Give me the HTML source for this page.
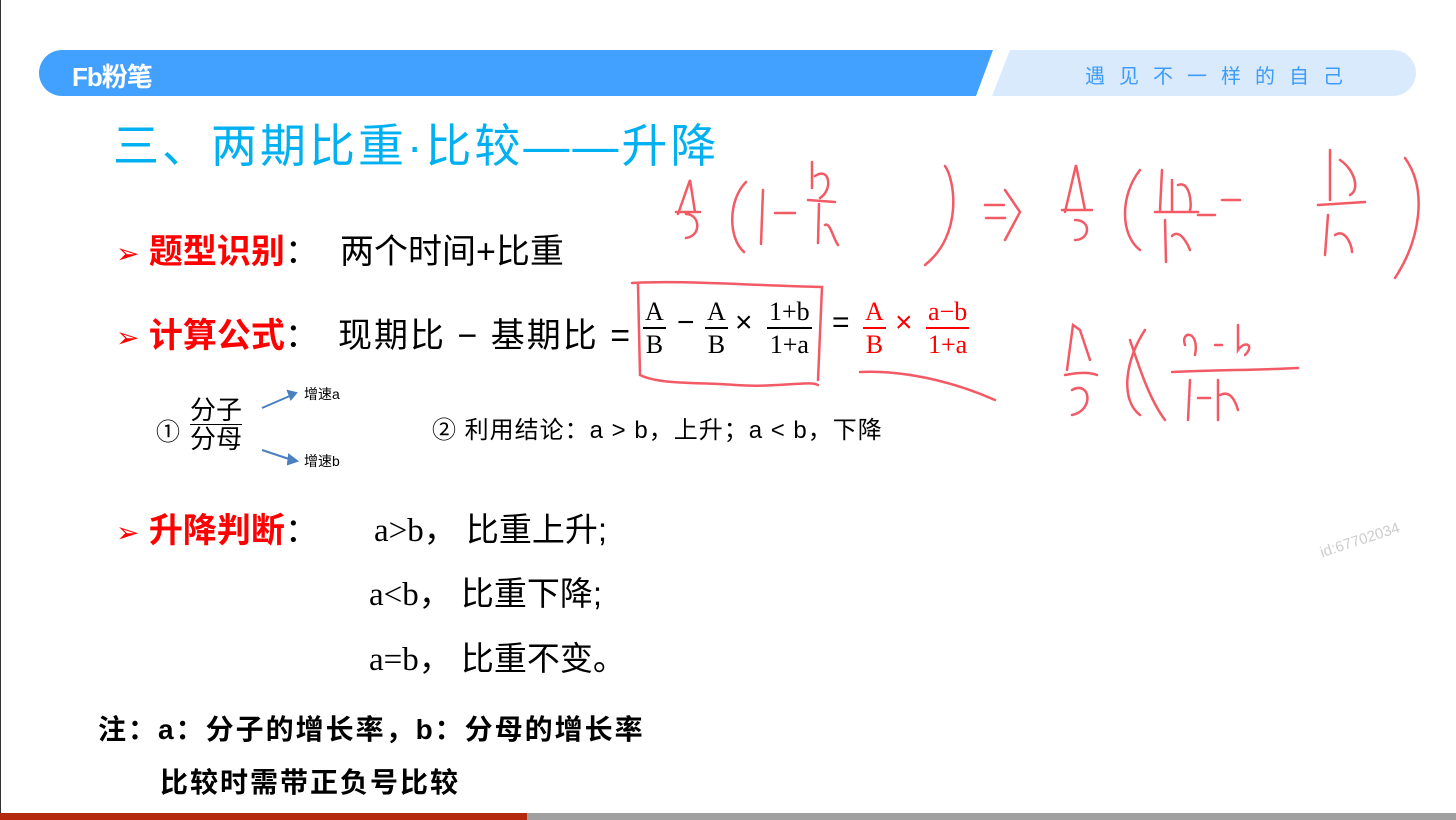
<!DOCTYPE html>
<html><head><meta charset="utf-8"><style>
body{margin:0;width:1456px;height:820px;background:#fff;position:relative;overflow:hidden;font-family:"Liberation Sans","Noto Sans CJK SC",sans-serif;}
.a{position:absolute;white-space:nowrap;}
.red{color:#f00;font-weight:bold;}
.tri{color:#f00;font-size:28px;}
.frac{position:absolute;text-align:center;font-family:"Liberation Serif","Noto Serif CJK SC",serif;font-size:26px;line-height:31px;}
.frac .n{border-bottom:2px solid #000;padding:0 2px;}
.op{position:absolute;font-size:30px;top:306px;}
</style></head><body>
<div class="a" style="left:0;top:0;width:1px;height:820px;background:#333"></div>
<svg class="a" style="left:0;top:0" width="1456" height="820">
<path d="M62 50 H993 L976 96 H62 A23 23 0 0 1 62 50Z" fill="#42a0ff"/>
<path d="M1010 50 H1393 A23 23 0 0 1 1393 96 H992Z" fill="#daeafd"/>
<rect x="0" y="813" width="527" height="7" fill="#b5290e"/>
<rect x="527" y="813" width="929" height="7" fill="#a0a0a0"/>
<g fill="none" stroke="#f25a66" stroke-width="2.5" stroke-linecap="round">
<path d="M678 214 L690 180 L695 212 M676 212 H700 M686 214 C700 214 702 236 686 238"/>
<path d="M746 182 C728 200 728 238 744 252"/>
<path d="M763 190 L761 244"/><path d="M775 213 H795"/>
<path d="M812 162 L812 188 M815 176 C830 166 833 190 820 198 M808 200 L835 202 M819 204 L818 243 M825 225 C830 222 833 238 838 245"/>
<path d="M820 166 C830 180 838 235 800 265" transform="translate(125,0)"/>
<path d="M985 205 H1004 M986 218 H1005 M1005 190 L1020 212 L1005 240"/>
<path d="M1065 212 L1076 165 L1085 210 M1062 210 H1092 M1075 220 C1092 220 1090 240 1075 240"/>
<path d="M1140 170 C1120 195 1120 235 1140 250"/>
<path d="M1162 170 L1160 210 M1172 180 L1172 210 M1178 185 C1190 180 1192 205 1190 210 M1155 212 H1198 M1165 220 L1166 262 M1172 236 C1180 228 1188 245 1190 250 M1198 215 H1215"/>
<path d="M1222 200 H1240"/>
<path d="M1330 150 L1330 200 M1340 160 C1355 170 1360 190 1350 195 M1318 205 L1365 202 M1328 215 L1325 255 M1335 235 C1345 228 1352 245 1352 252"/>
<path d="M1405 158 C1428 190 1420 240 1395 278"/>
<path d="M638 285 L640 375 C660 385 700 382 735 385 C780 388 810 380 818 385 M632 283 C680 280 740 285 822 287 L818 380"/>
<path d="M860 372 C900 370 950 380 995 400"/>
<path d="M1067 370 L1073 325 L1080 330 L1090 360 M1065 375 C1080 372 1090 372 1097 375 M1072 390 C1090 380 1095 410 1072 415"/>
<path d="M1130 340 C1140 370 1150 400 1165 420 M1145 330 C1125 360 1120 400 1140 415"/>
<path d="M1172 372 C1215 370 1260 370 1298 368"/>
<path d="M1185 345 C1180 330 1200 330 1195 355 M1215 345 H1222 M1238 325 L1238 350 C1245 340 1255 345 1245 355"/>
<path d="M1190 380 L1188 420 M1198 398 H1210 M1218 380 L1218 420 M1220 395 C1230 390 1235 400 1238 410"/>
</g>
<g stroke="#4a7fc0" stroke-width="2" fill="#4a7fc0">
<path d="M262 408 L292 395"/><path d="M296 393 L288 391 L291 399Z"/>
<path d="M262 450 L292 460"/><path d="M297 461 L289 455 L288 464Z"/>
</g>
</svg>
<div class="a" style="left:72px;top:57px;color:#fff;font-size:26px;font-weight:bold;letter-spacing:-1px">Fb粉笔</div>
<div class="a" style="left:1085px;top:60px;color:#3d9cf8;font-size:20px;letter-spacing:14px">遇见不一样的自己</div>
<div class="a" style="left:113px;top:110px;color:#00b0f0;font-size:46px;letter-spacing:3px">三、两期比重·比较——升降</div>
<div class="a" style="left:116px;top:224px;font-size:34px"><span class="tri">➢</span> <span class="red">题型识别</span>：</div>
<div class="a" style="left:340px;top:224px;font-size:34px">两个时间+比重</div>
<div class="a" style="left:116px;top:308px;font-size:34px"><span class="tri">➢</span> <span class="red">计算公式</span>：</div>
<div class="a" style="left:338px;top:308px;font-size:34px;letter-spacing:2px">现期比 − 基期比 =</div>
<div class="frac" style="left:643px;top:296px"><div class="n">A</div><div>B</div></div>
<div class="op" style="left:677px">−</div>
<div class="frac" style="left:705px;top:296px"><div class="n">A</div><div>B</div></div>
<div class="op" style="left:735px">×</div>
<div class="frac" style="left:767px;top:296px"><div class="n">1+b</div><div>1+a</div></div>
<div class="op" style="left:832px">=</div>
<div class="frac" style="left:863px;top:296px;color:#f00"><div class="n" style="border-color:#f00">A</div><div>B</div></div>
<div class="op" style="left:895px;color:#f00">×</div>
<div class="frac" style="left:926px;top:296px;color:#f00"><div class="n" style="border-color:#f00">a−b</div><div>1+a</div></div>
<div class="a" style="left:156px;top:412px;font-size:24px">①</div>
<div class="a" style="left:190px;top:396px;font-size:26px;line-height:28px;text-align:center"><div style="border-bottom:1.5px solid #000">分子</div><div>分母</div></div>
<div class="a" style="left:304px;top:384px;font-size:14px">增速a</div>
<div class="a" style="left:304px;top:451px;font-size:14px">增速b</div>
<div class="a" style="left:432px;top:410px;font-size:24px;letter-spacing:1px">② 利用结论：a &gt; b，上升；a &lt; b，下降</div>
<div class="a" style="left:116px;top:503px;font-size:34px"><span class="tri">➢</span> <span class="red">升降判断</span>：</div>
<div class="a" style="left:374px;top:503px;font-size:33px"><span style="font-family:'Liberation Serif',serif">a&gt;b</span>，&nbsp;比重上升;</div>
<div class="a" style="left:369px;top:567px;font-size:33px"><span style="font-family:'Liberation Serif',serif">a&lt;b</span>，&nbsp;比重下降;</div>
<div class="a" style="left:369px;top:632px;font-size:33px"><span style="font-family:'Liberation Serif',serif">a=b</span>，&nbsp;比重不变。</div>
<div class="a" style="left:1318px;top:545px;font-size:15px;color:#ccc;transform:rotate(-18deg);transform-origin:left top">id:67702034</div>
<div class="a" style="left:98px;top:708px;font-size:28px;font-weight:bold;letter-spacing:2px">注：a：分子的增长率，b：分母的增长率</div>
<div class="a" style="left:160px;top:761px;font-size:28px;font-weight:bold;letter-spacing:2px">比较时需带正负号比较</div>
</body></html>
